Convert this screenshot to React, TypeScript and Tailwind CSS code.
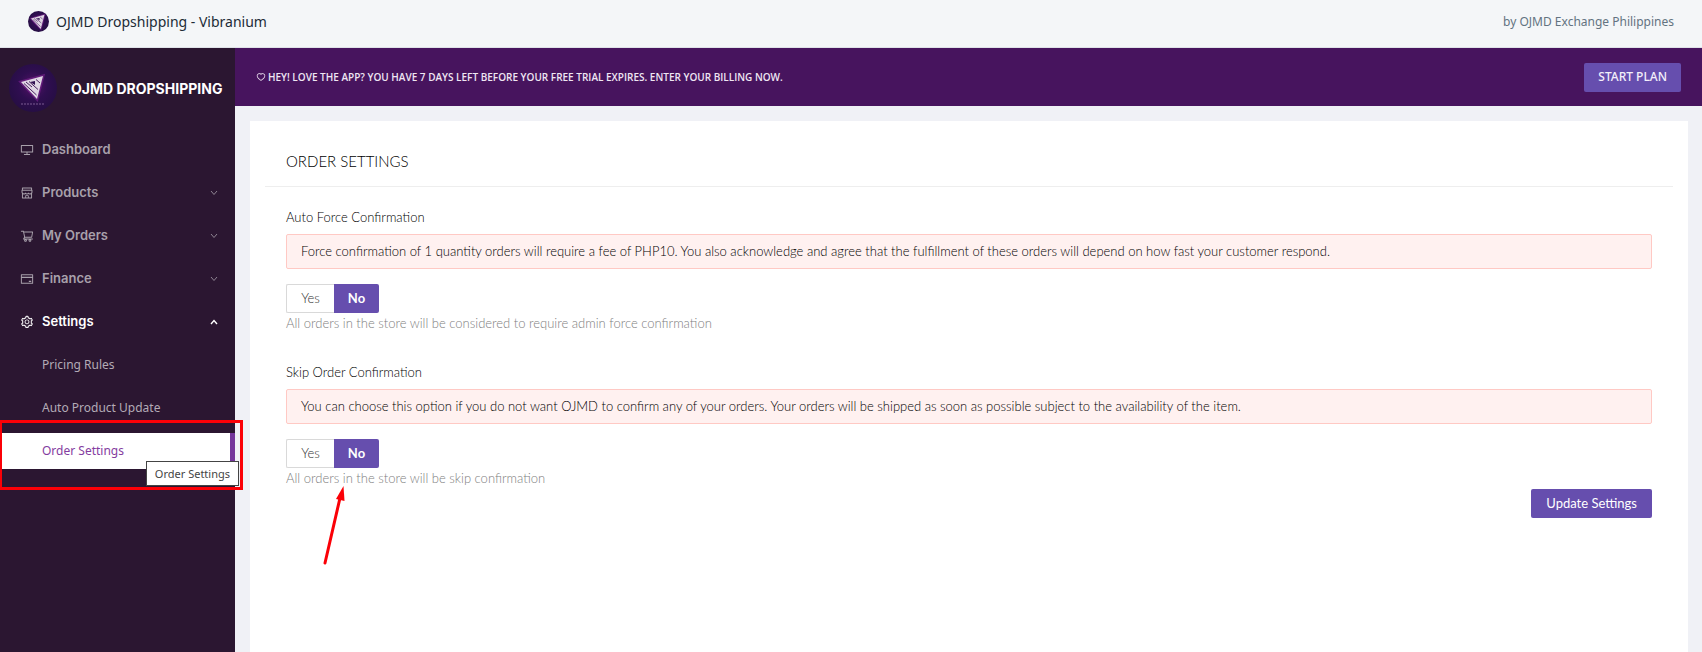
import React from "react";
import {
  AiOutlineCreditCard,
  AiOutlineDesktop,
  AiOutlineHeart,
  AiOutlineSetting,
  AiOutlineShop,
  AiOutlineShoppingCart,
} from "react-icons/ai";
import type { IconType } from "react-icons";
import { clsx } from "clsx";

interface NavItem {
  label: string;
  icon: IconType;
  expandable?: boolean;
  children?: { label: string; active?: boolean }[];
}

const NAV_ITEMS: NavItem[] = [
  { label: "Dashboard", icon: AiOutlineDesktop },
  { label: "Products", icon: AiOutlineShop, expandable: true },
  { label: "My Orders", icon: AiOutlineShoppingCart, expandable: true },
  { label: "Finance", icon: AiOutlineCreditCard, expandable: true },
  {
    label: "Settings",
    icon: AiOutlineSetting,
    expandable: true,
    children: [
      { label: "Pricing Rules" },
      { label: "Auto Product Update" },
      { label: "Order Settings", active: true },
    ],
  },
];

const LogoMark: React.FC<{ className?: string; wordmark?: boolean }> = ({ className, wordmark }) => (
  <svg viewBox="0 0 48 48" className={className} aria-hidden="true">
    <defs>
      <radialGradient id="disc" cx="50%" cy="45%" r="55%">
        <stop offset="0" stopColor="#541268" />
        <stop offset="0.55" stopColor="#2f0e50" />
        <stop offset="1" stopColor="#260e44" />
      </radialGradient>
    </defs>
    <circle cx="24" cy="24" r="24" fill="url(#disc)" />
    <g transform={wordmark ? undefined : "translate(-10 -8) scale(1.4)"}>
      <path d="M12 18 L34 12 L28 35 Z" fill="#8b2a9c" opacity="0.6" stroke="#7d2391" strokeWidth="3" />
      <path d="M12 18 L34 12 L28 35 Z" fill="#ded5e3" />
      <path
        d="M15 19.5 L27.5 31 M20 17.5 L29 25.5 M17 18 L23 23 M27 15.5 L31 19"
        stroke="#4a2060"
        strokeWidth="1"
        fill="none"
      />
      <path d="M21 18 L26 17 L26 21 Z" fill="#2f0e50" />
    </g>
    {wordmark && <path d="M12 40 H36" stroke="#7a5a92" strokeWidth="1" strokeDasharray="2 1" />}
  </svg>
);

const Chevron: React.FC<{ up?: boolean }> = ({ up }) => (
  <svg
    viewBox="0 0 8 6"
    className={clsx("h-[6px] w-2", !up && "opacity-80")}
    fill="none"
    stroke="currentColor"
    strokeWidth={up ? 1.4 : 1}
    aria-hidden="true"
  >
    <path d={up ? "M1 5 L4 1.5 L7 5" : "M1 1 L4 4.5 L7 1"} />
  </svg>
);

const Sidebar: React.FC = () => (
  <aside className="w-[235px] shrink-0 bg-[#2b1631]">
    <div className="flex h-20 items-center gap-3.5 pl-[9px]">
      <LogoMark className="h-12 w-12" wordmark />
      <span className="whitespace-nowrap font-['Inter'] text-[14px] font-bold text-white">OJMD DROPSHIPPING</span>
    </div>
    <nav className="relative">
      {NAV_ITEMS.map(({ label, icon: Icon, expandable, children }) => (
        <div key={label}>
          <button
            type="button"
            aria-expanded={expandable ? !!children : undefined}
            className={clsx(
              "flex h-[43px] w-full items-center gap-2 pl-5 pr-[17px] font-['Inter'] text-[13px] font-semibold",
              children ? "text-white" : "text-[#a8a0ab]"
            )}
          >
            <Icon size={14} />
            <span className="flex-1 text-left">{label}</span>
            {expandable && <Chevron up={!!children} />}
          </button>
          {children && (
            <div className="pt-px">
              {children.map((child) => (
                <div key={child.label} className="h-[43px] pt-[3px]">
                  <a
                    href="#"
                    className={clsx(
                      "flex h-9 w-full items-center pl-[42px] font-['Noto_Sans'] text-[12px]",
                      child.active ? "border-r-[5px] border-[#74359b] bg-white text-[#843ca0]" : "text-[#b3abb6]"
                    )}
                  >
                    {child.label}
                  </a>
                </div>
              ))}
            </div>
          )}
        </div>
      ))}
      {/* highlight around the active entry */}
      <div className="absolute -bottom-[17px] -left-px -right-2 z-10 h-[70px] border-[3px] border-[#fb0007]" />
      <div
        role="tooltip"
        className="absolute -bottom-[13px] -right-1 z-20 border border-[#444] bg-white px-2 py-px font-['Noto_Sans'] text-[11px] leading-[21px] text-[#444]"
      >
        Order Settings
      </div>
    </nav>
  </aside>
);

interface SettingFieldProps {
  title: string;
  notice: string;
  help: string;
}

const SettingField: React.FC<SettingFieldProps> = ({ title, notice, help }) => (
  <section className="text-[13px] font-light">
    <h3 className="leading-5 text-black">{title}</h3>
    <p className="mt-[7px] rounded-xs border border-[#ffc9c4] bg-[#fff1f0] px-3.5 py-1.5 leading-[21px] text-black">
      {notice}
    </p>
    <div role="group" aria-label={title} className="mt-[15px] flex h-[29px]">
      <button type="button" className="w-12 rounded-l-xs border border-r-0 border-[#d9d9d9] text-[#333]">
        Yes
      </button>
      <button type="button" aria-pressed="true" className="w-[45px] rounded-r-xs bg-[#664eae] font-bold text-white">
        No
      </button>
    </div>
    <p className="leading-5 text-[#808080]">{help}</p>
  </section>
);

const App: React.FC = () => (
  <div className="flex min-h-screen flex-col bg-[#f0f1f6]">
    <header className="flex h-12 items-center justify-between border-b border-[#dfe3e8] bg-[#f4f6f8] px-7 pb-1 font-['Noto_Sans']">
      <div className="flex items-center gap-[7px]">
        <LogoMark className="h-[21px] w-[21px]" />
        <h1 className="text-[14px] text-[#212b36]">OJMD Dropshipping - Vibranium</h1>
      </div>
      <span className="text-[12px] text-[#637381]">by OJMD Exchange Philippines</span>
    </header>

    <div className="flex flex-1">
      <Sidebar />
      <div className="flex min-w-0 flex-1 flex-col">
        <div className="flex h-[58px] items-center justify-between bg-[#47145e] px-[21px] text-white">
          <p className="flex items-center gap-0.5 font-['Open_Sans'] text-[10px] font-semibold text-[#efe6f3]">
            <AiOutlineHeart size={10} />
            HEY! LOVE THE APP? YOU HAVE 7 DAYS LEFT BEFORE YOUR FREE TRIAL EXPIRES. ENTER YOUR BILLING NOW.
          </p>
          <button
            type="button"
            className="h-[29px] rounded-xs bg-[#664eae] px-3.5 font-['Noto_Sans'] text-[12px] font-medium text-[#f3effa]"
          >
            START PLAN
          </button>
        </div>

        <main className="ml-[15px] mr-3.5 mt-[15px] flex-1 bg-white px-[15px] font-['Lato']">
          <h2 className="border-b border-[#eeeeee] px-[21px] pb-[15px] pt-[30px] text-[15px] font-light leading-5 text-black">
            ORDER SETTINGS
          </h2>
          <form className="flex flex-col gap-[29px] px-[21px] pt-5" onSubmit={(e) => e.preventDefault()}>
            <SettingField
              title="Auto Force Confirmation"
              notice="Force confirmation of 1 quantity orders will require a fee of PHP10. You also acknowledge and agree that the fulfillment of these orders will depend on how fast your customer respond."
              help="All orders in the store will be considered to require admin force confirmation"
            />
            <div className="relative">
              <SettingField
                title="Skip Order Confirmation"
                notice="You can choose this option if you do not want OJMD to confirm any of your orders. Your orders will be shipped as soon as possible subject to the availability of the item."
                help="All orders in the store will be skip confirmation"
              />
              <svg viewBox="0 0 24 82" className="absolute left-9 top-[122px] h-[82px] w-6" aria-hidden="true">
                <path d="M3 79 L18 14" stroke="#fb0007" strokeWidth="3" strokeLinecap="round" />
                <path d="M21.5 2 L22.5 17 L14 15 Z" fill="#fb0007" />
              </svg>
              <button
                type="submit"
                className="ml-auto mt-px block h-[29px] rounded-xs bg-[#664eae] px-[15px] text-[13px] text-white"
              >
                Update Settings
              </button>
            </div>
          </form>
        </main>
      </div>
    </div>
  </div>
);

export default App;
